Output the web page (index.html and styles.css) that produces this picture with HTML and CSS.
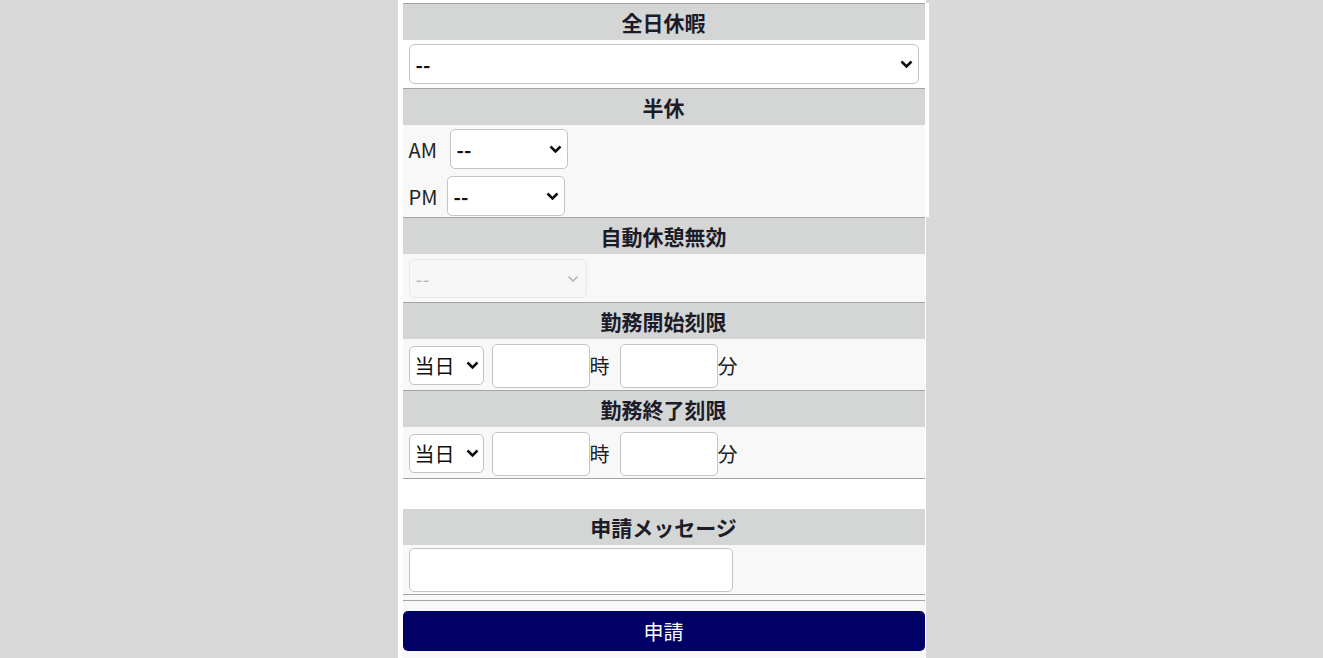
FILE: index.html
```html
<!DOCTYPE html>
<html lang="ja">
<head>
    <meta charset="UTF-8">
    <meta name="viewport" content="width=device-width, initial-scale=1.0">
    <title>勤務申請</title>
    <link rel="stylesheet" href="styles.css">
</head>
<body>
    <div class="page">
        <div class="top">
            <div class="section">
                <div class="head">全日休暇</div>
                <div class="body body-white">
                    <select class="sel sel-full">
                        <option>--</option>
                    </select>
                </div>
            </div>

            <div class="section">
                <div class="head">半休</div>
                <div class="body body-half">
                    <div class="row">
                        <label class="lbl">AM</label>
                        <select class="sel sel-half"><option>--</option></select>
                    </div>
                    <div class="row">
                        <label class="lbl">PM</label>
                        <select class="sel sel-half"><option>--</option></select>
                    </div>
                </div>
            </div>
        </div>

        <div class="section">
            <div class="head">自動休憩無効</div>
            <div class="body body-off">
                <select class="sel sel-off" disabled><option>--</option></select>
            </div>
        </div>

        <div class="section">
            <div class="head">勤務開始刻限</div>
            <div class="body body-time">
                <select class="sel sel-day"><option>当日</option></select>
                <input type="text" class="txt txt-time">
                <span class="unit">時</span>
                <input type="text" class="txt txt-time">
                <span class="unit">分</span>
            </div>
        </div>

        <div class="section">
            <div class="head">勤務終了刻限</div>
            <div class="body body-time">
                <select class="sel sel-day"><option>当日</option></select>
                <input type="text" class="txt txt-time">
                <span class="unit">時</span>
                <input type="text" class="txt txt-time">
                <span class="unit">分</span>
            </div>
        </div>

        <div class="spacer"></div>

        <div class="section section-msg">
            <div class="head">申請メッセージ</div>
            <div class="body body-msg">
                <input type="text" class="txt txt-msg">
            </div>
        </div>

        <div class="footer">
            <button class="submit">申請</button>
        </div>
    </div>
</body>
</html>
```

FILE: styles.css
```css
html, body {
    margin: 0;
    height: 100%;
}

body {
    background-color: #d9d9d9;
    font-family: "Noto Sans CJK JP", "Noto Sans", sans-serif;
    color: #1c1c28;
}

.page {
    width: 528px;
    min-height: 100%;
    margin: 0 auto;
    padding: 3px 1px 0 5px;
    box-sizing: border-box;
    background-color: #ffffff;
    display: flex;
    flex-direction: column;
}

.top {
    background-color: #ffffff;
    margin: 0 -4px 0 -5px;
    padding: 0 4px 0 5px;
}

.section {
    border-top: 1px solid #a3a3a3;
}

.head {
    height: 36px;
    line-height: 36px;
    background-color: #d4d5d5;
    text-align: center;
    font-size: 21px;
    font-weight: bold;
}

.body {
    background-color: #f8f8f8;
    padding: 5px 6px 3px;
}

.body-white {
    background-color: #ffffff;
    padding: 4px 6px 4px;
}

.body-half {
    padding: 4px 6px 1px;
    display: flex;
    flex-direction: column;
    gap: 7px;
}

.row {
    display: flex;
    align-items: center;
    gap: 9px;
}

.lbl {
    font-size: 20px;
    color: #222;
    min-width: 32px;
}

.sel {
    appearance: none;
    -webkit-appearance: none;
    height: 40px;
    border: 1px solid #c4c4c4;
    border-radius: 5px;
    background-color: #ffffff;
    background-image: url("data:image/svg+xml,%3Csvg xmlns='http://www.w3.org/2000/svg' width='13' height='9' viewBox='0 0 13 9'%3E%3Cpath d='M1.5 1.5 6.5 6.5 11.5 1.5' fill='none' stroke='%23111' stroke-width='2.6'/%3E%3C/svg%3E");
    background-repeat: no-repeat;
    background-position: right 5px center;
    font-family: "Noto Sans CJK JP", "Noto Sans", sans-serif;
    font-size: 20px;
    font-weight: bold;
    color: #111;
    padding: 0 24px 0 6px;
    display: block;
}

.sel-full {
    width: 510px;
}

.sel-half {
    width: 118px;
}

.row:last-child .lbl {
    min-width: 29px;
}

.body-off {
    padding: 5px 6px 4px;
}

.sel-off {
    width: 178px;
    height: 39px;
    font-weight: normal;
    color: #9a9a9a;
    background-color: #f6f6f6;
    border-color: #e4e4e4;
    background-image: url("data:image/svg+xml,%3Csvg xmlns='http://www.w3.org/2000/svg' width='12' height='8' viewBox='0 0 12 8'%3E%3Cpath d='M1.5 1.5 6 6 10.5 1.5' fill='none' stroke='%23999' stroke-width='1.6'/%3E%3C/svg%3E");
    background-position: right 7px center;
}

.body-time {
    padding: 4px 6px 2px;
    display: flex;
    align-items: center;
    height: 45px;
}

.sel-day {
    width: 75px;
    height: 39px;
    font-weight: normal;
    padding: 0 18px 0 5px;
    background-position: right 4px center;
    margin-right: 8px;
}

.txt {
    height: 44px;
    box-sizing: border-box;
    border: 1px solid #c4c4c4;
    border-radius: 5px;
    background-color: #ffffff;
    font-size: 18px;
    padding: 0 6px;
}

.txt-time {
    width: 98px;
}

.unit {
    font-size: 20px;
    color: #222;
    margin-right: 10px;
}

.spacer {
    border-top: 1px solid #a3a3a3;
    height: 30px;
    background-color: #ffffff;
}

.section-msg {
    border-top: none;
}

.body-msg {
    padding: 3px 6px 2px;
}

.txt-msg {
    width: 324px;
    display: block;
}

.footer {
    flex: 1;
    background-color: #f8f8f8;
    border-top: 1px solid #a3a3a3;
    padding-top: 16px;
    position: relative;
}

.footer::before {
    content: "";
    position: absolute;
    left: 0;
    right: 0;
    top: 5px;
    border-top: 1px solid #a3a3a3;
}

.submit {
    width: 100%;
    height: 40px;
    border: none;
    border-radius: 5px;
    background-color: #000066;
    color: #ffffff;
    font-family: "Noto Sans CJK JP", "Noto Sans", sans-serif;
    font-size: 20px;
    cursor: pointer;
    display: block;
}
```
